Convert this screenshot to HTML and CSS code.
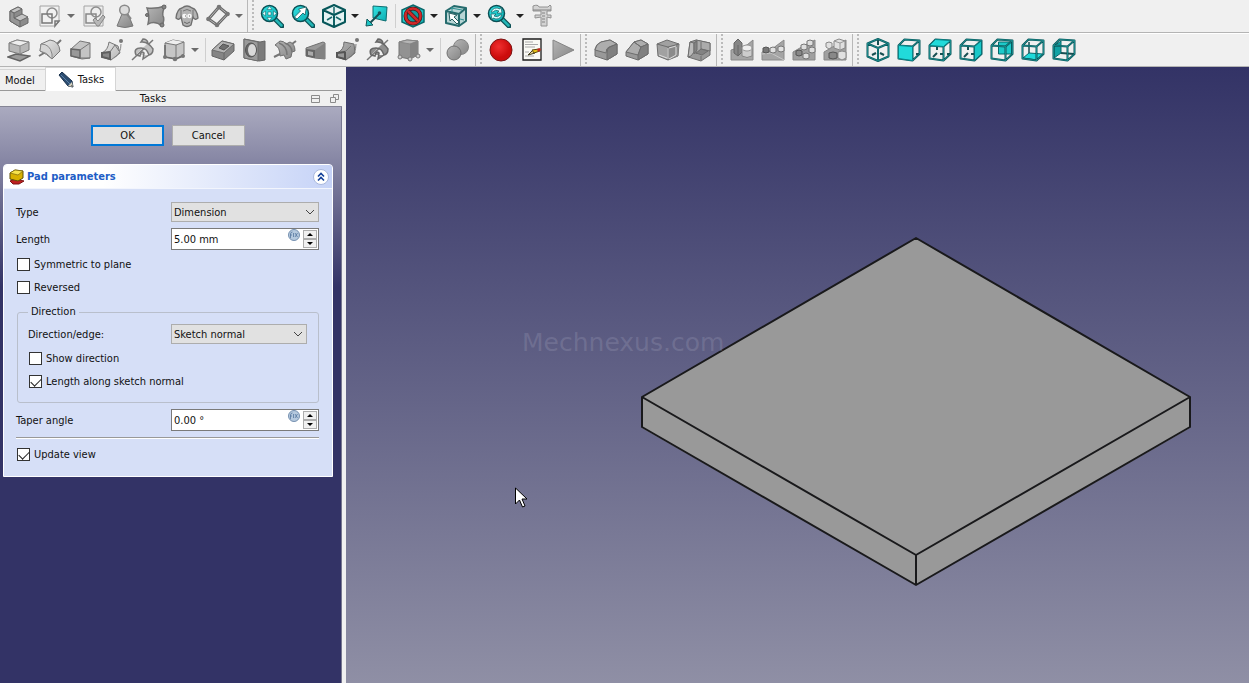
FILE: index.html
```html
<!DOCTYPE html>
<html lang="en">
<head>
<meta charset="utf-8">
<title>Pad parameters</title>
<link rel="stylesheet" href="styles.css">
</head>
<body>
<svg class="sprite" aria-hidden="true">
  <defs>
    <linearGradient id="gray" x1="0" y1="0" x2="1" y2="1"><stop offset="0" stop-color="#b5b5b5"/><stop offset="1" stop-color="#858585"/></linearGradient>
    <linearGradient id="light" x1="0" y1="0" x2="1" y2="1"><stop offset="0" stop-color="#ececec"/><stop offset="1" stop-color="#b4b4b4"/></linearGradient>
    <linearGradient id="cyan" x1="0" y1="0" x2="1" y2="1"><stop offset="0" stop-color="#35e3e3"/><stop offset="1" stop-color="#0aaeb2"/></linearGradient>
    <radialGradient id="red" cx=".4" cy=".35"><stop offset="0" stop-color="#f03030"/><stop offset="1" stop-color="#cc0c0c"/></radialGradient>
  </defs>
  <symbol id="lens" viewBox="0 0 24 24"><path d="M14 14l8 8" stroke="#0b4f54" stroke-width="5" stroke-linecap="round"/><path d="M15 15l6.500 6.500" stroke="#23b5b5" stroke-width="2.500" stroke-linecap="round"/><circle cx="9.500" cy="9.500" r="8" fill="url(#cyan)" stroke="#0b4f54" stroke-width="1.500"/></symbol>
  <symbol id="cubeback" viewBox="0 0 24 24"><path d="M9 8v4M9 15l-4 4M12 16h3M19 16h3" fill="none" stroke="#174f52" stroke-width="2"/></symbol>
  <symbol id="cubeframe" viewBox="0 0 24 24"><path d="M1.500 7.500l14 1v14l-14-2zM1.500 7.500l6-6 15 1v13.500l-7 6.500M15.500 8.500l7-6" fill="none" stroke="#07575a" stroke-width="2" stroke-linejoin="round"/><path d="M1.500 7.500l14 1v14l-14-2zM1.500 7.500l6-6 15 1v13.500l-7 6.500M15.500 8.500l7-6" fill="none" stroke="#2aa5a6" stroke-width=".6"/></symbol>
</svg>

<header class="toolbars">
  <div class="row">
    <div class="group">
      <button class="tool" aria-label="Create body"><svg viewBox="0 0 24 24"><g stroke="#686868" stroke-linejoin="round"><path d="M3 7l8-4 4 2v6l6 3v5l-8 4-10-6z" fill="#8c8c8c"/><path d="M3 7l8-4 4 2-8 4zM7 14l8-4 6 3-8 4z" fill="#c4c4c4"/><path d="M3 7l4 2v5l6 3v6L3 17z" fill="#969696"/></g></svg></button>
      <button class="tool" aria-label="Create sketch"><svg viewBox="0 0 24 24"><path d="M2 2h19v16l-4 4H2z" fill="#f1f1f1" stroke="#a4a4a4"/><circle cx="14" cy="9" r="5" fill="none" stroke="#8c8c8c" stroke-width="1.500"/><path d="M4 10h10v9H4zM21 17l-4 5v-5z" fill="none" stroke="#777" stroke-width="1.500"/></svg></button>
      <button class="drop" aria-label="Sketch menu"></button>
      <button class="tool" aria-label="Validate sketch"><svg viewBox="0 0 24 24"><path d="M2 2h19v20H2z" fill="#eee" stroke="#a4a4a4"/><circle cx="14" cy="8" r="5" fill="none" stroke="#8c8c8c" stroke-width="1.500"/><path d="M4 10h10v9H4z" fill="none" stroke="#888" stroke-width="1.500"/><path d="M11 16l2-2 3 3 5-6 2 2-6 9h-2z" fill="#b7b7b7" stroke="#858585"/></svg></button>
      <button class="tool" aria-label="Check geometry"><svg viewBox="0 0 24 24"><path d="M9 10h6l5 12q-8 3-16 0z" fill="url(#gray)" stroke="#777"/><path d="M13 9l5 6" stroke="#888" stroke-width="2"/><circle cx="11.500" cy="6" r="4.800" fill="#ddd" stroke="#8a8a8a" stroke-width="1.500"/></svg></button>
      <button class="tool" aria-label="Shape binder"><svg viewBox="0 0 24 24"><path d="M3 4q9 1 18-2-3 6-2 10 2 3-1 10-7-6-14-2 2-8-1-16z" fill="url(#gray)" stroke="#747474" stroke-width="1.500"/><g fill="#858585" stroke="#666"><circle cx="3" cy="11" r="1.500"/><circle cx="20" cy="3" r="2"/><circle cx="18" cy="21" r="2"/></g></svg></button>
      <button class="tool" aria-label="Clone"><svg viewBox="0 0 24 24"><path d="M7 4Q2 5 1 14q3 3 5-1l2 8q4 3 8 0l2-8q2 4 5 1Q22 5 17 4q-5-4-10 0z" fill="#b4b4b4" stroke="#6f6f6f" stroke-width="1.300"/><path d="M6 6v8M18 6v8M8 7q4-3 8 0" fill="none" stroke="#777"/><circle cx="9.500" cy="12" r="2.300" fill="#f7f7f7"/><circle cx="14.500" cy="12" r="2.300" fill="#f7f7f7"/><path d="M10 12h1M14 12h1M9 18q3 3 6 0" fill="none" stroke="#666"/></svg></button>
      <button class="tool" aria-label="Create datum"><svg viewBox="0 0 24 24"><path d="M11 21L2.500 15 13 3l8.500 7z" fill="none" stroke="#686868" stroke-width="3"/><path d="M11 21L2.500 15 13 3l8.500 7z" fill="none" stroke="#b8b8b8"/><g fill="#777"><circle cx="11" cy="21" r="2.300"/><circle cx="2.500" cy="15" r="2.300"/><circle cx="13" cy="3" r="2.300"/><circle cx="21.500" cy="10" r="2.300"/></g></svg></button>
      <button class="drop" aria-label="Datum menu"></button>
    </div>
    <div class="group grip">
      <button class="tool" aria-label="Fit all"><svg viewBox="0 0 24 24"><use href="#lens"/><path d="M9.500 2.500l2.500 3H7zM9.500 16.500l2.500-3H7zM2.500 9.500l3-2.500v5zM16.500 9.500l-3-2.500v5zM8 8h3v3H8z" fill="#eaffff" stroke="#155a5f" stroke-width=".5"/></svg></button>
      <button class="tool" aria-label="Fit selection"><svg viewBox="0 0 24 24"><use href="#lens"/><path d="M3.500 13l6-6-2-2 8-2-1.500 8-2-2-6 6z" fill="#fff" stroke="#155a5f" stroke-width=".8"/></svg></button>
      <button class="tool" aria-label="Isometric view"><svg viewBox="0 0 24 24"><path d="M12 1l11 5v12l-11 5-11-5V6zM1 6l11 5 11-5M12 11v12" fill="#e5f3f3" stroke="#07575a" stroke-width="2" stroke-linejoin="round"/><path d="M12 3v7M5 16l5-3M19 16l-5-3M12 14v6" stroke="#15686b" stroke-width="1.500"/></svg></button>
      <button class="drop dark" aria-label="View menu"></button>
      <button class="tool" aria-label="Align to selection"><svg viewBox="0 0 24 24"><path d="M8 2l14 1-1 14L8 14z" fill="url(#cyan)" stroke="#0c6d70"/><path d="M15 9L5 19" stroke="#164f53" stroke-width="2"/><path d="M1 22l1-7 6 6z" fill="#1fc5c5" stroke="#12575a"/><circle cx="14.500" cy="9" r="1.800" fill="#185257"/></svg></button>
      <span class="separator"></span>
      <button class="tool" aria-label="Draw style"><svg viewBox="0 0 24 24"><path d="M12 1l11 5v12l-11 5-11-5V6z" fill="url(#cyan)" stroke="#0b686b" stroke-width="1.500"/><circle cx="12" cy="12" r="7.500" fill="#16999c" stroke="#49191b" stroke-width="4"/><circle cx="12" cy="12" r="7.500" fill="none" stroke="#d22828" stroke-width="2.500"/><path d="M7 7l10 10" stroke="#49191b" stroke-width="4"/><path d="M7 7l10 10" stroke="#d22828" stroke-width="2.500"/></svg></button>
      <button class="drop dark" aria-label="Draw style menu"></button>
      <button class="tool" aria-label="Selection view"><svg viewBox="0 0 24 24"><path d="M2 7l8-5 12 2v13l-7 5-13-3zM2 7l13 3v12M15 10l7-6" fill="#b8d5d5" stroke="#256b6d" stroke-width="2" stroke-linejoin="round"/><path d="M8 3v5M20 16l-4-1M7 4l11 2" stroke="#2c8f91"/><path d="M5 9l8 2-3 2 5 5-2 2-5-5-2 2z" fill="#fff" stroke="#245c5e"/></svg></button>
      <button class="drop dark" aria-label="Selection menu"></button>
      <button class="tool" aria-label="Synchronize view"><svg viewBox="0 0 24 24"><use href="#lens"/><path d="M4 8q3-6 9-3l1-2 1 6h-5l2-2q-4-2-6 1zM15 11q-3 6-9 3l-1 2-1-6h5l-2 2q4 2 6-1z" fill="#e0ffff" stroke="#155a5f" stroke-width=".7"/></svg></button>
      <button class="drop dark" aria-label="Zoom menu"></button>
      <button class="tool" aria-label="Measure"><svg viewBox="0 0 24 24"><path d="M3 2q5-2 6 1h9l2-2 1 1v5h-4v4h4v3l-4-1v9h-6v-9l-6 1v-3h6V7H3z" fill="#d3d3d3" stroke="#929292"/><path d="M3 6h18M12 9h3M12 12h3M12 15h3M12 18h3" stroke="#848484"/></svg></button>
    </div>
  </div>

  <div class="row">
    <div class="group">
      <button class="tool" aria-label="Pad"><svg viewBox="0 0 24 24"><path d="M1 19l8-3 14 2-10 5z" fill="#9b9b9b" stroke="#646464" stroke-width="1.500"/><path d="M2 5l8-3 12 2v8l-9 4-11-3z" fill="#b7b7b7" stroke="#777"/><path d="M2 5l8-3 12 2-9 4z" fill="#ededed" stroke="#888"/><path d="M13 8v8" stroke="#888"/></svg></button>
      <button class="tool" aria-label="Revolution"><svg viewBox="0 0 24 24"><path d="M1 18l5-3M19 6l4-4" stroke="#777" stroke-width="2"/><path d="M3 6l9-4q9 1 10 11l-8 8Q9 16 2 13z" fill="url(#light)" stroke="#777"/><path d="M3 6q9 0 11 10v5Q9 14 2 13z" fill="#d5d5d5" stroke="#888"/></svg></button>
      <button class="tool" aria-label="Additive loft"><svg viewBox="0 0 24 24"><path d="M2 11l9-8 10 2v15l-8 1-11-3z" fill="#c4c4c4" stroke="#777"/><path d="M2 11l9 1v8l-9-2z" fill="#999" stroke="#666" stroke-width="1.500"/><path d="M11 12l10-7M11 20l10 0" stroke="#777"/></svg></button>
      <button class="tool" aria-label="Additive pipe"><svg viewBox="0 0 24 24"><path d="M2 15Q8 12 9 4l9 4 2 7-9 7-9-3z" fill="url(#light)" stroke="#777"/><path d="M2 15l8-1v7l-8-2z" fill="#888" stroke="#5f5f5f" stroke-width="2"/><path d="M10 14l5-7 4 6" fill="none" stroke="#777"/><path d="M14 20q7-4 7-14" fill="none" stroke="#888"/><circle cx="21" cy="3" r="2" fill="#777"/></svg></button>
      <button class="tool" aria-label="Additive helix"><svg viewBox="0 0 24 24"><path d="M1 22L22 2" stroke="#777" stroke-width="1.500"/><path d="M5 17q-3-7 5-7 6 0 8 7 4-1 4-6-5-8-12-7l2-3q4 0 5 4M5 17l4 1q1-6 4-3l-1 6 6-4" fill="#c2c2c2" stroke="#777" stroke-width="1.500"/></svg></button>
      <button class="tool" aria-label="Additive primitive"><svg viewBox="0 0 24 24"><path d="M3 5l8-3 11 2v12l-8 5-11-2z" fill="#c6c6c6" stroke="#777"/><path d="M3 5l8-3 11 2-8 3z" fill="#eee"/><path d="M3 5l11 2 8-3M14 7v14" fill="none" stroke="#777"/><path d="M3 7v12l11 2 7-3" fill="none" stroke="#6a6a6a" stroke-width="1.500"/><g fill="#777"><circle cx="3" cy="19" r="2"/><circle cx="13" cy="21" r="2.300"/><circle cx="21" cy="18" r="2"/></g></svg></button>
      <button class="drop" aria-label="Additive primitives"></button>
      <span class="separator"></span>
      <button class="tool" aria-label="Pocket"><svg viewBox="0 0 24 24"><path d="M1 12L11 3l12 3v7l-10 9-12-4z" fill="#858585" stroke="#646464"/><path d="M1 12L11 3l12 3-10 9z" fill="#b4b4b4" stroke="#6d6d6d"/><path d="M8 10l4-4 6 2-5 4z" fill="#6f6f6f" stroke="#555"/><path d="M13 15v7" stroke="#666"/></svg></button>
      <button class="tool" aria-label="Hole"><svg viewBox="0 0 24 24"><path d="M2 1l16 3 5-1v19l-6 1-15-3z" fill="#7b7b7b" stroke="#666"/><path d="M2 1l14 3v19L2 20z" fill="#9a9a9a" stroke="#6d6d6d"/><ellipse cx="9" cy="12" rx="5.500" ry="7" fill="#696969" stroke="#555"/><ellipse cx="10" cy="12" rx="4" ry="6" fill="#d9d9d9"/></svg></button>
      <button class="tool" aria-label="Groove"><svg viewBox="0 0 24 24"><path d="M1 19l6-3M19 6l4-3" stroke="#777" stroke-width="2"/><path d="M2 7l5-4q4 0 6 3l4-2q5 2 5 9l-3 1-1 5-5 2-2-4-4 1Q7 9 2 7z" fill="url(#gray)" stroke="#6f6f6f"/><path d="M6 5q8 3 8 12M12 5q7 3 7 9" fill="none" stroke="#777" stroke-width="1.500"/></svg></button>
      <button class="tool" aria-label="Subtractive loft"><svg viewBox="0 0 24 24"><path d="M2 10l17-6 2 1v16l-10-1-9-2z" fill="#999" stroke="#707070"/><path d="M2 11l9 1v8l-9-2z" fill="#666"/><path d="M4 13l5 1v4l-5-1z" fill="#aaa"/><path d="M11 12l10-7v16l-10-1z" fill="#828282"/></svg></button>
      <button class="tool" aria-label="Subtractive pipe"><svg viewBox="0 0 24 24"><path d="M2 15Q9 12 9 4l10 2 1 9-9 7-9-3z" fill="url(#gray)" stroke="#6c6c6c"/><path d="M2 15l8-1v7l-8-2z" fill="#999" stroke="#555" stroke-width="2"/><path d="M10 14l6-6M14 20q7-4 7-14" fill="none" stroke="#777"/><circle cx="22" cy="2" r="2" fill="#777"/></svg></button>
      <button class="tool" aria-label="Subtractive helix"><svg viewBox="0 0 24 24"><path d="M1 22L22 2" stroke="#777" stroke-width="1.500"/><path d="M5 17q-3-7 5-7 6 0 8 7 4-1 4-6-5-8-12-7l2-3q4 0 5 4M5 17l4 1q1-6 4-3l-1 6 6-4" fill="#8e8e8e" stroke="#666" stroke-width="1.500"/></svg></button>
      <button class="tool" aria-label="Subtractive primitive"><svg viewBox="0 0 24 24"><path d="M2 4l8-2 11 1v14l-8 4-11-2z" fill="#929292" stroke="#747474"/><path d="M2 4l8-2 11 1-8 3z" fill="#b5b5b5" stroke="#888"/><path d="M13 6l8-3v14l-8 4z" fill="#848484"/><g fill="#ccc" stroke="#777"><circle cx="3" cy="19" r="2"/><circle cx="13" cy="21" r="2"/><circle cx="21" cy="18" r="2"/></g></svg></button>
      <button class="drop" aria-label="Subtractive primitives"></button>
      <span class="separator"></span>
      <button class="tool" aria-label="Boolean"><svg viewBox="0 0 24 24"><circle cx="15" cy="9" r="7.500" fill="url(#gray)" stroke="#858585"/><circle cx="8" cy="15" r="7" fill="url(#gray)" stroke="#717171"/></svg></button>
    </div>
    <div class="group grip">
      <button class="tool" aria-label="Record macro"><svg viewBox="0 0 24 24"><circle cx="12" cy="12" r="11" fill="url(#red)" stroke="#7a1414"/></svg></button>
      <button class="tool" aria-label="Macros"><svg viewBox="0 0 24 24"><path d="M3 1h18v21H3z" fill="#fafaf5" stroke="#1b1b1b" stroke-width="1.300"/><path d="M5 4h8M5 6.500h13M5 9h10M5 14h4M5 18h9" stroke="#aaa"/><path d="M8 17l5-5 2 3z" fill="#e8d48b" stroke="#454020"/><path d="M12 12l7-1 1 2-6 2z" fill="#e7c515" stroke="#5c4a10"/><path d="M17 11l3-1 1 2-3 2z" fill="#c42b22"/></svg></button>
      <button class="tool" aria-label="Run macro"><svg viewBox="0 0 24 24"><path d="M2 2l21 10L2 22z" fill="url(#gray)" stroke="#858585"/></svg></button>
    </div>
    <div class="group grip">
      <button class="tool" aria-label="Fillet"><svg viewBox="0 0 24 24"><g stroke="#6d6d6d" stroke-linejoin="round"><path d="M1 11q1-5 6-7l9-2 7 4v10l-10 6-12-4z" fill="#999"/><path d="M7 4l9-2 7 4-8 3q-3 1-3 6L1 12q1-6 6-8z" fill="#adadad"/><path d="M13 22v-7q0-5 3-6l7-3v10z" fill="#808080"/></g></svg></button>
      <button class="tool" aria-label="Chamfer"><svg viewBox="0 0 24 24"><g stroke="#6d6d6d" stroke-linejoin="round"><path d="M1 14l8-10 7-2 7 4v10l-10 6-12-4z" fill="#999"/><path d="M9 4l7-2 7 4-7 3zM1 14l8-10 7 5-3 8z" fill="#adadad"/><path d="M13 22v-5l3-8 7-3v10z" fill="#808080"/></g></svg></button>
      <button class="tool" aria-label="Draft"><svg viewBox="0 0 24 24"><path d="M1 6l10-4 12 4-1 12-10 4-10-4z" fill="#a1a1a1" stroke="#6e6e6e"/><path d="M12 9l11-3-1 12-10 4z" fill="#8a8a8a"/><path d="M1 6l11 3 11-3M12 9v13" fill="none" stroke="#6e6e6e"/><path d="M12 10v11M13 10l7-2M13 21l7-4M20 9v8M3 17l8 3" fill="none" stroke="#dcdcdc"/></svg></button>
      <button class="tool" aria-label="Thickness"><svg viewBox="0 0 24 24"><g stroke="#6e6e6e" stroke-linejoin="round"><path d="M3 4l6-2 14 3v12l-9 6-13-4z" fill="#989898"/><path d="M9 2l14 3v8l-9-2-5 5z" fill="#ababab"/><path d="M3 4l4 1v9l-3 4-3 1z" fill="#bbb"/><path d="M7 5l3-2v9l-3 4zM9 15l5-4 7 2-6 4z" fill="#828282"/><path d="M14 4v7M14 18v4" fill="none"/></g></svg></button>
    </div>
    <div class="group grip">
      <button class="tool" aria-label="Mirrored"><svg viewBox="0 0 24 24"><path d="M1 12l16-5 6-5v20H1z" fill="#a5a5a5" stroke="#888"/><path d="M4 5l4-4 4 4v9l-4 4-4-3z" fill="#858585" stroke="#666"/><path d="M8 7v10" stroke="#666"/><path d="M12 10v8q5 3 10 0v-8" fill="#ccc" stroke="#858585"/><ellipse cx="17" cy="10" rx="5" ry="3" fill="#eee" stroke="#999"/></svg></button>
      <button class="tool" aria-label="Linear pattern"><svg viewBox="0 0 24 24"><path d="M1 14h6L23 2v20H1z" fill="#a5a5a5" stroke="#8a8a8a"/><path d="M1 16l9-1 13 7" fill="none" stroke="#c7c7c7"/><path d="M2 10l3-1 3 1v4l-3 1-3-1z" fill="#777" stroke="#555"/><g fill="#e1e1e1" stroke="#777"><path d="M9 10l3-1 3 1v4l-3 1-3-1zM17 9l3-1 3 1v4l-3 1-3-1z"/></g></svg></button>
      <button class="tool" aria-label="Polar pattern"><svg viewBox="0 0 24 24"><path d="M1 14l12-7 10-5v20H1z" fill="#a0a0a0" stroke="#888"/><g fill="#ddd" stroke="#777"><path d="M9 7l3-1 3 1v4l-3 1-3-1zM15 3l3-1 3 1v4l-3 1-3-1zM17 10l3-1 3 1v4l-3 1-3-1zM11 16l3-1 3 1v4l-3 1-3-1z"/></g><path d="M4 13l3-1 3 1v4l-3 1-3-1z" fill="#888" stroke="#555"/></svg></button>
      <button class="tool" aria-label="Multi-transform"><svg viewBox="0 0 24 24"><path d="M1 14l12-7 10-5v20H1z" fill="#a0a0a0" stroke="#888"/><g fill="#e0e0e0" stroke="#888"><path d="M11 3l5-2 6 2v7l-5 2-6-2zM15 14l4-1 4 1v6l-4 2-4-2zM3 5l3-1 3 1v4l-3 2-3-2z"/></g><path d="M6 15l4-1 4 1v5l-4 1-4-1z" fill="#888" stroke="#555"/><path d="M11 3l6 2 5-2M17 5v6" fill="none" stroke="#999"/></svg></button>
    </div>
    <div class="group grip last">
      <button class="tool" aria-label="Isometric"><svg viewBox="0 0 24 24"><path d="M12 1l10.500 4.500v13L12 23 1.500 18.500v-13zM1.500 5.500L12 10l10.500-4.500M12 10v13" fill="none" stroke="#07575a" stroke-width="2" stroke-linejoin="round"/><path d="M12 2v5M6 17l4-2M18 17l-4-2" stroke="#174f52" stroke-width="2"/><path d="M12 1l10.500 4.500v13L12 23 1.500 18.500v-13zM1.500 5.500L12 10l10.500-4.500M12 10v13" fill="none" stroke="#2aa5a6" stroke-width=".6"/></svg></button>
      <button class="tool" aria-label="Front"><svg viewBox="0 0 24 24"><use href="#cubeback"/><use href="#cubeframe"/><path d="M1.500 7.500l14 1v14l-14-2z" fill="#21dada" stroke="#07868a"/></svg></button>
      <button class="tool" aria-label="Top"><svg viewBox="0 0 24 24"><use href="#cubeback"/><use href="#cubeframe"/><path d="M1.500 7.500l6-6 15 1-7 6z" fill="#21dada" stroke="#07868a"/></svg></button>
      <button class="tool" aria-label="Right"><svg viewBox="0 0 24 24"><use href="#cubeback"/><use href="#cubeframe"/><path d="M15.500 8.500l7-6v13.500l-7 6.500z" fill="#18c8c8" stroke="#07757a"/></svg></button>
      <button class="tool" aria-label="Rear"><svg viewBox="0 0 24 24"><path d="M8.500 4h13v12h-13z" fill="#1cc9c9" stroke="#07686b"/><use href="#cubeframe"/></svg></button>
      <button class="tool" aria-label="Bottom"><svg viewBox="0 0 24 24"><path d="M2 20l6-5 14 1-6 6z" fill="#21dada" stroke="#07686b"/><path d="M8 4v11" stroke="#174f52" stroke-width="1.500"/><use href="#cubeframe"/></svg></button>
      <button class="tool" aria-label="Left"><svg viewBox="0 0 24 24"><path d="M2 8l7-5v12l-7 5z" fill="#12a2a4" stroke="#07686b"/><path d="M9 15l13 1" stroke="#174f52" stroke-width="2"/><use href="#cubeframe"/></svg></button>
    </div>
  </div>
</header>

<main class="workspace">
  <aside class="dock">
    <nav class="tabs">
      <button class="tab">Model</button>
      <button class="tab active"><svg viewBox="0 0 16 16"><path d="M1 3l3-3 10 9 1 6-5-1z" fill="#2b4c70" stroke="#18304c"/><path d="M3 3l9 9" stroke="#5b7fa6"/><path d="M10 14l4-4 1 5z" fill="#d5d0bd"/><path d="M13 14l1-1 1 2z" fill="#222"/></svg>Tasks</button>
    </nav>
    <div class="dock-title">
      <h1>Tasks</h1>
      <button class="dock-button" aria-label="Collapse"><svg viewBox="0 0 9 9"><path d="M.5 1.500h8v7h-8zM.5 4.500h8" fill="none" stroke="#8b8b8b"/></svg></button>
      <button class="dock-button" aria-label="Float"><svg viewBox="0 0 9 9"><path d="M3.500 3.500v-3h5v5h-3M.5 3.500h5v5h-5z" fill="none" stroke="#8b8b8b"/></svg></button>
    </div>
    <div class="tasks">
      <div class="actions"><button class="push default">OK</button><button class="push">Cancel</button></div>
      <section class="card">
        <header class="card-head">
          <svg class="pad-icon" viewBox="0 0 16 16"><path d="M1 12l5-2 9 2-5 3H4z" fill="#c02020" stroke="#7c1414"/><path d="M1 4l5-3 8 1v7l-5 3-8-2z" fill="#d8b000" stroke="#5f4e08"/><path d="M1 4l5-3 8 1-5 4z" fill="#f7e34b" stroke="#7b6509" stroke-width=".7"/></svg>
          <h2>Pad parameters</h2>
          <button class="collapse" aria-label="Collapse section"><svg viewBox="0 0 16 16"><circle cx="8" cy="8" r="7.500" fill="#fff" stroke="#a9b8dc"/><path d="M5 7.500l3-3 3 3M5 11.500l3-3 3 3" fill="none" stroke="#123f98" stroke-width="1.600"/></svg></button>
        </header>
        <form class="form">
          <div class="field"><label for="type">Type</label><span class="combo"><select id="type"><option>Dimension</option></select><svg viewBox="0 0 10 6"><path d="M1 1l4 4 4-4" fill="none" stroke="#444"/></svg></span></div>
          <div class="field value"><label for="length">Length</label><span class="spin"><input id="length" type="text" value="5.00 mm"><svg class="fx" viewBox="0 0 12 12"><circle cx="6" cy="6" r="5.500" fill="#b5c9de" stroke="#7590b0"/><path d="M2.500 9V5q0-2 2-2M2 6h2M5.500 4v4M7 4l2.500 4M9.500 4L7 8" fill="none" stroke="#55779f" stroke-width=".8"/></svg><span class="steps"><button type="button" aria-label="Increase length"></button><button type="button" aria-label="Decrease length"></button></span></span></div>
          <label class="check"><input type="checkbox">Symmetric to plane</label>
          <label class="check"><input type="checkbox">Reversed</label>
          <fieldset class="direction">
            <legend>Direction</legend>
            <div class="field"><label for="edge">Direction/edge:</label><span class="combo"><select id="edge"><option>Sketch normal</option></select><svg viewBox="0 0 10 6"><path d="M1 1l4 4 4-4" fill="none" stroke="#444"/></svg></span></div>
            <label class="check"><input type="checkbox">Show direction</label>
            <label class="check"><input type="checkbox" checked>Length along sketch normal</label>
          </fieldset>
          <div class="field value"><label for="taper">Taper angle</label><span class="spin"><input id="taper" type="text" value="0.00 °"><svg class="fx" viewBox="0 0 12 12"><circle cx="6" cy="6" r="5.500" fill="#b5c9de" stroke="#7590b0"/><path d="M2.500 9V5q0-2 2-2M2 6h2M5.500 4v4M7 4l2.500 4M9.500 4L7 8" fill="none" stroke="#55779f" stroke-width=".8"/></svg><span class="steps"><button type="button" aria-label="Increase angle"></button><button type="button" aria-label="Decrease angle"></button></span></span></div>
          <hr>
          <label class="check"><input type="checkbox" checked>Update view</label>
        </form>
      </section>
    </div>
  </aside>
  <section class="viewport" aria-label="3D view">
    <svg class="model" viewBox="0 0 903 616" role="img" aria-label="Square plate">
      <path d="M570 171l274 159v31L570 518 296 361v-31z" fill="#999"/>
      <path d="M570 171l274 159-274 158-274-158zM296 330v30l274 158 274-158v-30M570 488v30" fill="none" stroke="#19191b" stroke-width="2" stroke-linejoin="round"/>
    </svg>
    <p class="watermark">Mechnexus.com</p>
    <svg class="cursor" viewBox="0 0 12 21"><path d="M.5 1v16l4-4 3 7 2.500-1-3-7H12z" fill="#fff" stroke="#000"/></svg>
  </section>
</main>
</body>
</html>
```
FILE: styles.css
```css
* { box-sizing: border-box; }
body {
  margin: 0;
  height: 100vh;
  display: flex;
  flex-direction: column;
  overflow: hidden;
  background: #f0f0f0;
  color: #111;
  font: 11px/14px "DejaVu Sans Condensed", "DejaVu Sans", sans-serif;
}
button, input, select { font: inherit; color: inherit; }
button { padding: 0; border: 0; background: none; }
h1, h2, p { margin: 0; font-size: inherit; font-weight: normal; }
svg { display: block; }
.sprite { position: absolute; width: 0; height: 0; }

.row { display: flex; height: 33px; border-bottom: 1px solid #b4b4b4; }
.row + .row { height: 34px; border-top: 1px solid #fff; }
.group { display: flex; align-items: center; padding: 0 2px 0 3px; border-right: 1px solid #b8b8b8; }
.row:first-child .group { padding-right: 1px; }
.group.grip {
  padding-left: 9px;
  background: radial-gradient(circle, #bbb 1px, transparent 1px) 3px 3px / 4px 4px repeat-y;
}
.row:first-child .grip, .last { border-right: 0; }
.row:first-child .grip { padding-left: 8px; }
.tool { width: 31px; padding: 0 3px 0 4px; }
.tool svg { width: 24px; height: 24px; }
.drop { width: 13px; height: 24px; display: flex; align-items: center; padding-left: 2px; }
.drop::before { content: ""; border: 4px solid transparent; border-top-color: #6b6b6b; border-bottom: 0; }
.drop.dark { width: 12px; }
.drop.dark::before { border-top-color: #222; }
.separator { width: 5px; height: 24px; border-right: 1px solid #cfcfcf; margin-right: 1px; margin-left: -1px; }

.workspace { flex: 1; min-height: 0; display: flex; }
.dock { width: 346px; flex: none; display: flex; flex-direction: column; padding-right: 4px; }
.tabs { display: flex; align-items: flex-end; height: 24px; border-bottom: 1px solid #999; }
.tab { display: flex; align-items: center; gap: 4px; height: 21px; padding: 2px 10px 0 5px; border-top: 1px solid #d5d5d5; }
.tab.active { height: 24px; margin-bottom: -1px; padding: 0 11px 0 12px; background: #fff; border: 1px solid #d5d5d5; border-bottom: 0; }
.tab svg { width: 16px; height: 16px; }
.dock-title { display: flex; align-items: center; gap: 10px; height: 16px; padding-right: 3px; border-bottom: 1px solid #858595; }
.dock-title h1 { flex: 1; padding: 1px 0 0 5px; text-align: center; }
.dock-button svg { width: 9px; height: 9px; }
.tasks { flex: 1; padding: 18px 8px 0 3px; border-right: 1px solid #77778f; background: linear-gradient(#aaaabf, #333366 180px); }
.actions { display: flex; justify-content: center; gap: 8px; }
.push { width: 73px; height: 21px; padding-top: 1px; background: #e1e1e1; border: 1px solid #adadad; }
.push.default { border: 2px solid #0078d7; }

.card { margin-top: 18px; border: 1px solid #fff; border-radius: 4px 4px 0 0; background: #d6dff7; }
.card-head { display: flex; align-items: center; gap: 2px; height: 24px; padding: 0 3px 0 5px; border-radius: 3px 3px 0 0; border-bottom: 1px solid #f2f5fd; background: linear-gradient(90deg, #fff 30%, #c6d3f7); }
.card-head h2 { flex: 1; padding-top: 1px; color: #215dc6; font-weight: bold; }
.pad-icon, .collapse svg { width: 16px; height: 16px; }
.form { padding: 13px 13px 14px 12px; }
.field { display: flex; align-items: center; justify-content: space-between; }
.field label { padding-top: 2px; }
.field.value { margin-top: 6px; }
.combo, .spin { display: flex; position: relative; width: 148px; }
.combo select { appearance: none; width: 100%; height: 20px; padding: 2px 20px 0 2px; border: 1px solid #adadad; border-radius: 0; background: #e1e1e1; }
.combo svg { position: absolute; right: 4px; top: 7px; width: 10px; height: 6px; pointer-events: none; }
.spin { height: 22px; padding-right: 1px; border: 1px solid #7a7a7a; background: #fff; }
.spin input { flex: 1; min-width: 0; padding: 2px 2px 0; border: 0; background: none; outline: 0; }
.fx { width: 12px; height: 12px; margin-right: 3px; }
.steps { display: grid; grid-template-rows: 1fr 1fr; width: 14px; padding: 1px 0; }
.steps button { display: grid; place-items: center; border: 1px solid #adadad; background: #f0f0f0; }
.steps button::before { content: ""; border: 3px solid transparent; border-top: 0; border-bottom-color: #000; }
.steps button:last-child::before { border: 3px solid transparent; border-bottom: 0; border-top-color: #000; }
.check { display: flex; align-items: flex-start; gap: 4px; height: 14px; margin-top: 9px; }
.check input { appearance: none; display: grid; place-items: center; width: 13px; height: 13px; margin: 0 0 0 1px; border: 1px solid #333; background: #fff; }
.check input:checked::before { content: ""; width: 9px; height: 5px; border: solid #222; border-width: 0 0 1px 1px; transform: translateY(-1px) rotate(-45deg); }
.field + .check { margin-top: 8px; }
.direction { margin: 10px 0 0 1px; padding: 5px 11px 13px 10px; border: 1px solid #b9bfcc; border-radius: 3px; }
.direction legend { padding: 0 3px; height: 14px; }
.direction .combo { width: 136px; }
hr { height: 2px; margin: 6px 0 9px; border: 0; border-top: 1px solid #999; border-bottom: 1px solid #fff; }

.viewport { flex: 1; position: relative; min-width: 0; background: linear-gradient(#333366, #8f8fa5); }
.model { width: 100%; height: 100%; }
.watermark { position: absolute; left: 176px; top: 260px; color: rgba(190, 190, 210, .2); font: 25px/32px "DejaVu Sans", sans-serif; }
.cursor { position: absolute; left: 169px; top: 420px; width: 12px; height: 21px; }
```
